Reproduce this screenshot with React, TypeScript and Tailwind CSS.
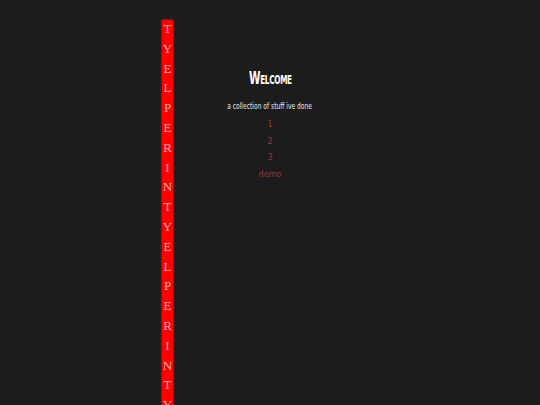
import React from 'react';

const WORD = 'TYELPERIN';
const LETTERS = Array.from({ length: 22 }, (_, i) => WORD[i % WORD.length]);

export default function App() {
  return (
    <div className="relative h-[405px] w-full overflow-hidden bg-[#1c1c1c]">
      <div className="absolute left-[30%] top-[20px] flex w-[11px] flex-col items-center bg-[#ff0000] shadow-[0_0_2px_#ff2020]">
        {LETTERS.map((l, i) => (
          <span
            key={i}
            className="block h-[19.8px] text-[13px] leading-[17px] text-[#f4b4b4]"
            style={{ fontFamily: '"Liberation Serif", serif' }}
          >
            {l}
          </span>
        ))}
      </div>
      <div
        className="flex flex-col items-center pt-[67px] text-center"
        style={{ fontFamily: '"DejaVu Sans Condensed", "DejaVu Sans", sans-serif' }}
      >
        <h1 className="origin-center scale-x-[0.68] text-[17px] font-bold leading-[22px] tracking-[-0.5px] text-white [font-variant:small-caps]">
          Welcome
        </h1>
        <p className="mt-[11px] scale-x-[0.7] text-[9.5px] leading-[12px] text-[#e8e8e8]">
          a collection of stuff ive done
        </p>
        <nav className="mt-[4px] flex flex-col items-center text-[9px] leading-[16.6px] text-[#8e3c3c]">
          <a>1</a>
          <a>2</a>
          <a>3</a>
          <a>demo</a>
        </nav>
      </div>
    </div>
  );
}
